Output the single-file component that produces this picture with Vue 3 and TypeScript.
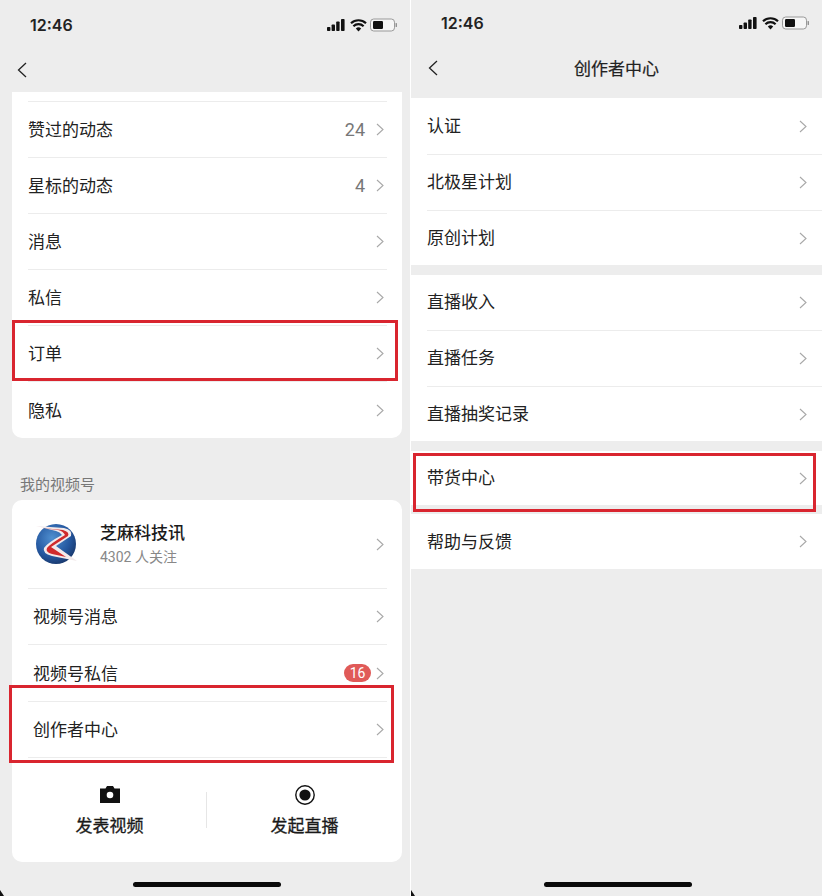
<script setup lang="ts">
interface Row {
  label: string;
  value?: string;
  badge?: string;
  tall?: boolean;
}

const topRows: Row[] = [
  { label: '赞过的动态', value: '24' },
  { label: '星标的动态', value: '4' },
  { label: '消息' },
  { label: '私信' },
  { label: '订单' },
  { label: '隐私', tall: true },
];

const channelRows: Row[] = [
  { label: '视频号消息' },
  { label: '视频号私信', badge: '16', tall: true },
  { label: '创作者中心' },
];

const groups: string[][] = [
  ['认证', '北极星计划', '原创计划'],
  ['直播收入', '直播任务', '直播抽奖记录'],
  ['带货中心'],
  ['帮助与反馈'],
];
</script>

<template>
  <div class="screens">
    <!-- left phone -->
    <section class="phone">
      <div class="status">
        <span class="time">12:46</span>
        <svg class="status-icons" width="70" height="14" viewBox="0 0 70 14">
          <rect x="0" y="9" width="3.4" height="4" rx="0.8" fill="#111" />
          <rect x="4.6" y="6.5" width="3.4" height="6.5" rx="0.8" fill="#111" />
          <rect x="9.2" y="3.5" width="3.4" height="9.5" rx="0.8" fill="#111" />
          <rect x="14" y="1" width="3.6" height="12" rx="0.8" fill="#111" />
          <path d="M24 5.2a11 11 0 0 1 15 0M26.4 8.2a7.4 7.4 0 0 1 10.2 0" fill="none" stroke="#111" stroke-width="2.2" />
          <path d="M28.8 10.6a3.8 3.8 0 0 1 5.4 0L31.5 13.4z" fill="#111" />
          <rect x="43.5" y="1" width="24" height="12" rx="3.2" fill="#f6f6f6" stroke="#999" />
          <rect x="46" y="3" width="10" height="8" rx="1.2" fill="#111" />
          <rect x="68.6" y="5" width="1.3" height="4" rx="0.6" fill="#888" />
        </svg>
      </div>
      <div class="nav nav-left">
        <svg class="back" width="10" height="16" viewBox="0 0 10 16">
          <path d="M9 1 1.5 8 9 15" fill="none" stroke="#222" stroke-width="1.3" />
        </svg>
      </div>

      <div class="card card-top">
        <div v-for="row in topRows" :key="row.label" class="row" :class="{ tall: row.tall }">
          <span class="label">{{ row.label }}</span>
          <span v-if="row.value" class="value">{{ row.value }}</span>
          <svg class="chev" width="8" height="13" viewBox="0 0 8 13">
            <path d="M1 1l6 5.5L1 12" fill="none" stroke="#a8a8a8" stroke-width="1.1" />
          </svg>
        </div>
      </div>

      <div class="section-title">我的视频号</div>

      <div class="card card-channel">
        <div class="profile">
          <svg class="avatar" width="42" height="42" viewBox="0 0 42 42">
            <defs>
              <radialGradient id="globe" cx="0.4" cy="0.35" r="0.75">
                <stop offset="0" stop-color="#4f8fd0" />
                <stop offset="0.6" stop-color="#24579f" />
                <stop offset="1" stop-color="#16305f" />
              </radialGradient>
            </defs>
            <circle cx="20" cy="21" r="20" fill="url(#globe)" />
            <path d="M0 3 28 5Q37 7 35 13L20 23 41 38 16 33Q6 30 8 25Q11 20 26 12Q24 9 20 8Z" fill="#f2e9ea" />
            <path d="M6 5 27 7Q34 9 32 13L15 24 30 34 16 31Q9 29 11 25Q14 21 29 12Q27 8 22 7Z" fill="#d02a2c" />
          </svg>
          <div class="profile-text">
            <div class="name">芝麻科技讯</div>
            <div class="fans">4302 人关注</div>
          </div>
          <svg class="chev" width="8" height="13" viewBox="0 0 8 13">
            <path d="M1 1l6 5.5L1 12" fill="none" stroke="#a8a8a8" stroke-width="1.1" />
          </svg>
        </div>
        <div v-for="row in channelRows" :key="row.label" class="row inset" :class="{ tall: row.tall }">
          <span class="label">{{ row.label }}</span>
          <span v-if="row.badge" class="badge">{{ row.badge }}</span>
          <svg class="chev" width="8" height="13" viewBox="0 0 8 13">
            <path d="M1 1l6 5.5L1 12" fill="none" stroke="#a8a8a8" stroke-width="1.1" />
          </svg>
        </div>
        <div class="actions">
          <div class="action">
            <svg width="20" height="20" viewBox="0 0 20 20">
              <path d="M0 3.5h5.5L7 1h6l1.5 2.5H20V18H0z" fill="#111" />
              <circle cx="10" cy="10" r="3.3" fill="#fff" />
            </svg>
            <span>发表视频</span>
          </div>
          <div class="action">
            <svg width="20" height="20" viewBox="0 0 20 20">
              <circle cx="10" cy="10" r="9.2" fill="none" stroke="#111" stroke-width="1.4" />
              <circle cx="10" cy="10" r="5.6" fill="#111" />
            </svg>
            <span>发起直播</span>
          </div>
        </div>
      </div>

      <div class="home"></div>
      <div class="mark mark-order"></div>
      <div class="mark mark-creator"></div>
    </section>

    <!-- right phone -->
    <section class="phone phone-right">
      <div class="status status-right">
        <span class="time">12:46</span>
        <svg class="status-icons" width="70" height="14" viewBox="0 0 70 14">
          <rect x="0" y="9" width="3.4" height="4" rx="0.8" fill="#111" />
          <rect x="4.6" y="6.5" width="3.4" height="6.5" rx="0.8" fill="#111" />
          <rect x="9.2" y="3.5" width="3.4" height="9.5" rx="0.8" fill="#111" />
          <rect x="14" y="1" width="3.6" height="12" rx="0.8" fill="#111" />
          <path d="M24 5.2a11 11 0 0 1 15 0M26.4 8.2a7.4 7.4 0 0 1 10.2 0" fill="none" stroke="#111" stroke-width="2.2" />
          <path d="M28.8 10.6a3.8 3.8 0 0 1 5.4 0L31.5 13.4z" fill="#111" />
          <rect x="43.5" y="1" width="24" height="12" rx="3.2" fill="#f6f6f6" stroke="#999" />
          <rect x="46" y="3" width="10" height="8" rx="1.2" fill="#111" />
          <rect x="68.6" y="5" width="1.3" height="4" rx="0.6" fill="#888" />
        </svg>
      </div>
      <div class="nav nav-right">
        <svg class="back" width="10" height="16" viewBox="0 0 10 16">
          <path d="M9 1 1.5 8 9 15" fill="none" stroke="#222" stroke-width="1.3" />
        </svg>
        <span class="title">创作者中心</span>
      </div>

      <div class="groups">
        <div v-for="(group, i) in groups" :key="i" class="group">
          <div v-for="item in group" :key="item" class="line">
            <span class="label">{{ item }}</span>
            <svg class="chev" width="8" height="13" viewBox="0 0 8 13">
              <path d="M1 1l6 5.5L1 12" fill="none" stroke="#a8a8a8" stroke-width="1.1" />
            </svg>
          </div>
        </div>
      </div>

      <div class="home"></div>
      <div class="mark mark-goods"></div>
    </section>
  </div>
</template>

<style scoped>
.screens {
  display: flex;
  gap: 1px;
  width: 822px;
  height: 896px;
  overflow: hidden;
  font-family: Inter, "Noto Sans CJK SC", sans-serif;
  color: #1c1c1c;
}

.phone {
  position: relative;
  width: 410px;
  height: 896px;
  flex: none;
  background: #ededed;
  display: flex;
  flex-direction: column;
}

/* bits of the black phone corner left in the screenshot */
.phone::after {
  content: "";
  position: absolute;
  left: 0;
  bottom: 0;
  width: 4px;
  height: 6px;
  background: #111;
  clip-path: polygon(0 0, 100% 100%, 0 100%);
}

.phone-right {
  width: 411px;
}

.status {
  height: 50px;
  flex: none;
  display: flex;
  align-items: center;
  justify-content: space-between;
  padding: 0 13px 0 30px;
}

.status-right {
  height: 46px;
  padding-right: 13px;
}

.time {
  font-size: 16px;
  font-weight: 600;
  color: #222;
}

.status-icons {
  display: block;
}

.nav {
  flex: none;
  display: flex;
  align-items: center;
}

.nav-left {
  height: 42px;
  padding: 0 0 2px 17px;
  box-sizing: border-box;
}

.nav-right {
  position: relative;
  height: 52px;
  padding: 0 0 8px 17px;
  box-sizing: border-box;
}

.title {
  flex: 1;
  text-align: center;
  font-size: 17px;
  margin-bottom: 2px;
  padding-right: 27px;
  color: #222;
  -webkit-text-stroke: 0.2px #222;
}

.back {
  display: block;
  flex: none;
}

.card {
  background: #fff;
  margin: 0 8px 0 12px;
  border-radius: 10px;
}

.card-top {
  padding-top: 9px;
  border-radius: 0 0 10px 10px;
}

.card-channel {
  height: 362px;
  display: flex;
  flex-direction: column;
}

.row {
  height: 56px;
  box-sizing: border-box;
  margin: 0 15px 0 16px;
  border-top: 1px solid #ececec;
  display: flex;
  align-items: center;
  font-size: 17px;
}

.row.tall {
  height: 57px;
}

.row.inset {
  padding-left: 5px;
}

.label {
  flex: 1;
  font-size: 17px;
  color: #222;
  margin-bottom: 2px;
}

.value {
  font-family: Roboto, sans-serif;
  font-size: 18px;
  color: #777;
  margin-right: 11px;
}

.chev {
  display: block;
  flex: none;
  margin-right: 3px;
}

.badge {
  width: 27px;
  height: 18px;
  line-height: 18px;
  border-radius: 9px;
  background: #e05a58;
  color: #fff;
  font-family: Roboto, sans-serif;
  font-size: 14px;
  text-align: center;
  margin-right: 5px;
}

.section-title {
  margin: 37px 0 0 20px;
  height: 25px;
  line-height: 20px;
  font-size: 15px;
  color: #777;
}

.profile {
  height: 88px;
  flex: none;
  box-sizing: border-box;
  margin: 0 15px 0 24px;
  display: flex;
  align-items: center;
}

.avatar {
  flex: none;
  display: block;
}

.profile-text {
  flex: 1;
  margin-left: 22px;
}

.name {
  font-size: 17px;
  font-weight: 500;
  line-height: 24px;
  color: #1a1a1a;
}

.fans {
  font-family: Roboto, "Noto Sans CJK SC", sans-serif;
  font-size: 14px;
  line-height: 22px;
  margin-top: 1px;
  color: #888;
}

.actions {
  flex: 1;
  display: grid;
  grid-template-columns: 1fr 1fr;
  position: relative;
}

.actions::before {
  content: "";
  position: absolute;
  left: 16px;
  right: 15px;
  top: 0;
  height: 1px;
  background: #ececec;
}

.actions::after {
  content: "";
  position: absolute;
  left: 194px;
  top: 35px;
  width: 1px;
  height: 36px;
  background: #e6e6e6;
}

.action {
  display: flex;
  flex-direction: column;
  align-items: center;
  padding-top: 28px;
  gap: 8px;
  font-size: 17px;
  line-height: 26px;
  color: #1a1a1a;
  -webkit-text-stroke: 0.3px #1a1a1a;
}

.action svg {
  display: block;
}

.groups {
  display: flex;
  flex-direction: column;
  gap: 10px;
}

.group {
  background: #fff;
}

.line {
  height: 56px;
  box-sizing: border-box;
  margin-left: 16px;
  padding-right: 12px;
  display: flex;
  align-items: center;
  border-top: 1px solid #ececec;
}

.line:first-child {
  border-top: 0;
}

.line:last-child,
.group:nth-child(2) .line:first-child {
  height: 55px;
}

.group:nth-child(3) .line {
  height: 54px;
}

.group:nth-child(4) {
  margin-top: -1px;
}

.line .label {
  margin-bottom: 4px;
}

.group:nth-child(4) .label {
  margin-bottom: 2px;
}

.home {
  position: absolute;
  left: 133px;
  bottom: 9px;
  width: 148px;
  height: 5px;
  border-radius: 3px;
  background: #0a0a0a;
}

.mark {
  position: absolute;
  box-sizing: border-box;
  border: 3px solid #d9252f;
}

.mark-order {
  left: 12px;
  top: 320px;
  width: 386px;
  height: 61px;
}

.mark-creator {
  left: 9px;
  top: 685px;
  width: 385px;
  height: 78px;
}

.mark-goods {
  left: 2px;
  top: 453px;
  width: 403px;
  height: 59px;
}
</style>

<style>
body {
  background: #fff;
}
</style>
